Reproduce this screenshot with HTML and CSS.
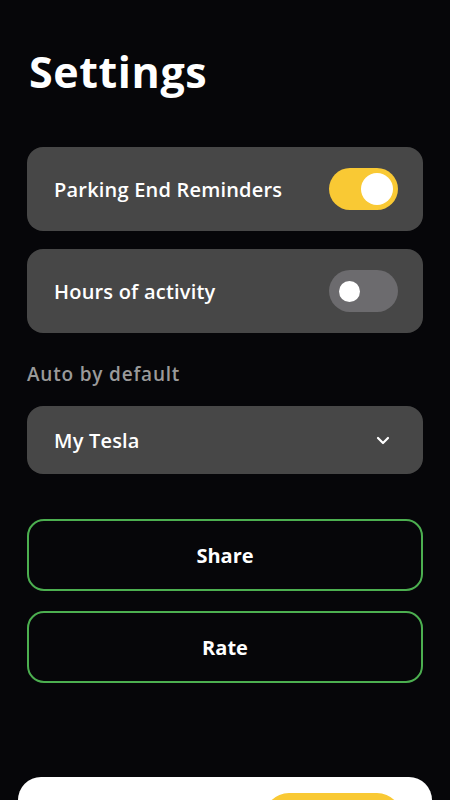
FILE: index.html
```html
<!DOCTYPE html>
<html lang="en">
<head>
  <meta charset="UTF-8" />
  <meta name="viewport" content="width=device-width, initial-scale=1.0" />
  <title>Settings</title>
  <link rel="stylesheet" href="styles.css">
</head>
<body>
  <div class="page">
    <h1 class="title">Settings</h1>

    <div class="card">
      <span class="card-label">Parking End Reminders</span>
      <span class="toggle on"><span class="knob"></span></span>
    </div>

    <div class="card">
      <span class="card-label">Hours of activity</span>
      <span class="toggle"><span class="knob"></span></span>
    </div>

    <p class="caption">Auto by default</p>

    <div class="select">
      <span class="card-label">My Tesla</span>
      <svg class="chevron" width="14" height="9" viewBox="0 0 14 9">
        <path d="M2 2l5 5 5-5" fill="none" stroke="#fff" stroke-width="2.2" stroke-linecap="round" stroke-linejoin="round"/>
      </svg>
    </div>

    <button class="outline-btn share">Share</button>
    <button class="outline-btn">Rate</button>
  </div>

  <div class="sheet">
    <span class="sheet-btn"></span>
  </div>
</body>
</html>
```

FILE: styles.css
```css
html, body {
  height: 800px;
  overflow: hidden;
}
body {
  margin: 0;
  background: #060609;
  color: #fff;
  font-family: "Open Sans", "Lato", sans-serif;
}
.page {
  padding: 0 27px;
}
.title {
  margin: 0;
  padding-top: 46px;
  padding-left: 2px;
  font-size: 43px;
  line-height: 52px;
  font-weight: 700;
  letter-spacing: 0.6px;
}
.card, .select {
  display: flex;
  align-items: center;
  justify-content: space-between;
  background: #474747;
  border-radius: 16px;
  padding: 0 25px 0 27px;
}
.card {
  height: 84px;
  margin-top: 18px;
}
.title + .card {
  margin-top: 49px;
}
.card-label {
  font-size: 20px;
  font-weight: 600;
  letter-spacing: 0.2px;
}
.toggle {
  display: flex;
  align-items: center;
  width: 69px;
  height: 42px;
  border-radius: 21px;
  background: #6c6b6e;
  box-sizing: border-box;
  padding-left: 10px;
}
.toggle .knob {
  width: 21px;
  height: 21px;
  border-radius: 50%;
  background: #fff;
}
.toggle.on {
  background: #f9c934;
  justify-content: flex-end;
  padding: 0 5px 0 0;
}
.toggle.on .knob {
  width: 32px;
  height: 32px;
}
.caption {
  margin: 29px 0 0;
  font-size: 19px;
  line-height: 24px;
  color: #9a9a9a;
  font-weight: 600;
  letter-spacing: 0.8px;
}
.select {
  height: 68px;
  margin-top: 20px;
  padding-right: 33px;
}
.outline-btn {
  display: block;
  width: 100%;
  height: 72px;
  margin-top: 20px;
  background: transparent;
  border: 2px solid #4caf50;
  border-radius: 17px;
  color: #fff;
  font-family: inherit;
  font-size: 20px;
  font-weight: 700;
}
.outline-btn.share {
  margin-top: 45px;
}
.sheet {
  margin: 94px 18px 0;
  height: 23px;
  overflow: hidden;
  background: #fff;
  border-radius: 30px 30px 0 0;
  padding: 16px 30px 0 0;
  box-sizing: border-box;
  display: flex;
  justify-content: flex-end;
}
.sheet-btn {
  flex: none;
  width: 138px;
  height: 50px;
  border-radius: 25px;
  background: #f9c934;
}
```
